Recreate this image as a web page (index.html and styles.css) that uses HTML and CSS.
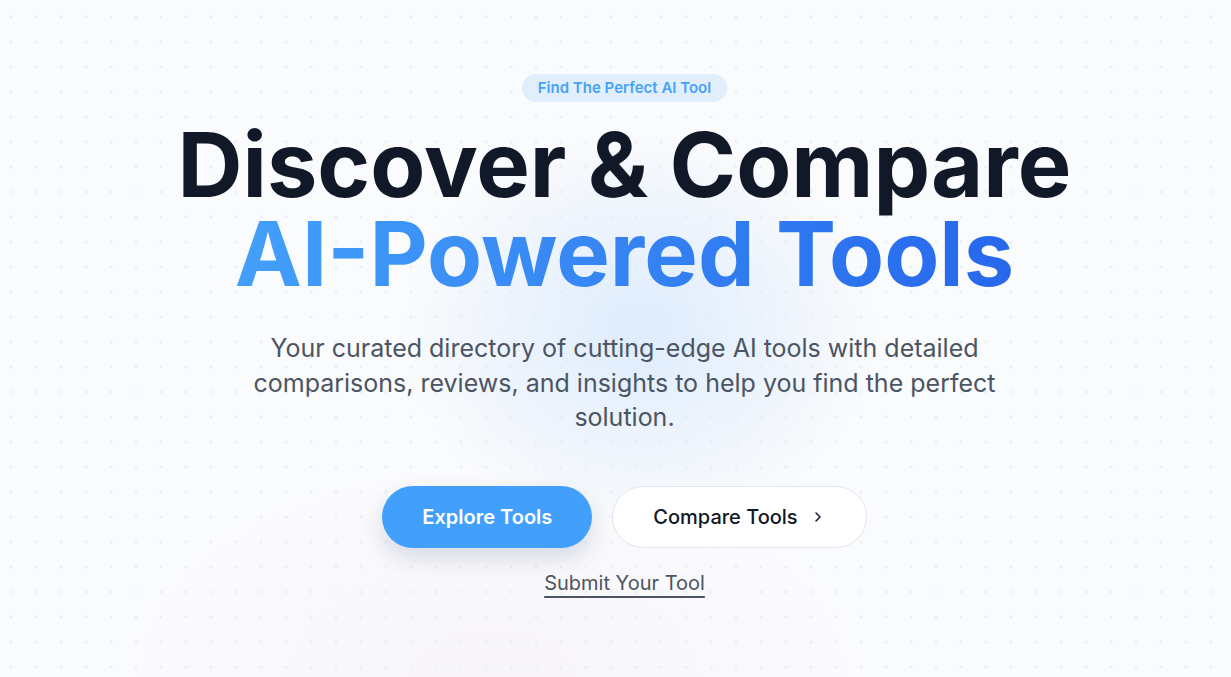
FILE: index.html
```html
<!DOCTYPE html>
<html lang="en">
<head>
<meta charset="utf-8">
<title>Discover &amp; Compare AI-Powered Tools</title>
<link rel="stylesheet" href="styles.css">
</head>
<body>
<section class="hero">
  <div class="glow"></div>
  <div class="hero-inner">
    <span class="badge">Find The Perfect AI Tool</span>
    <h1 class="title">
      <span class="title-line">Discover &amp; Compare</span>
      <span class="title-line title-gradient">AI-Powered Tools</span>
    </h1>
    <p class="lead">Your curated directory of cutting-edge AI tools with detailed comparisons, reviews, and insights to help you find the perfect solution.</p>
    <div class="actions">
      <a class="btn btn-primary" href="#">Explore Tools</a>
      <a class="btn btn-outline" href="#">Compare Tools
        <svg class="chev" width="16" height="16" viewBox="0 0 24 24" fill="none" stroke="currentColor" stroke-width="2.2" stroke-linecap="round" stroke-linejoin="round"><path d="M9 6l6 6-6 6"/></svg>
      </a>
    </div>
    <a class="submit" href="#">Submit Your Tool</a>
  </div>
</section>
</body>
</html>
```
FILE: styles.css
```css
* { box-sizing: border-box; }
html, body { margin: 0; padding: 0; }
body {
  font-family: Inter, "Noto Sans", "Liberation Sans", sans-serif;
  background: #fafbfc;
  color: #111827;
  min-height: 677px;
  overflow: hidden;
}
.hero {
  position: relative;
  min-height: 677px;
  background-color: #fafbfc;
  background-image:
    radial-gradient(circle at 50% 50%, #e9ecf7 0, #e9ecf7 1px, transparent 1.6px),
    radial-gradient(ellipse 520px 300px at 40% 100%, rgba(247, 243, 249, 0.8), rgba(247, 243, 249, 0) 70%);
  background-size: 25px 25px, 100% 100%;
  background-position: -1.5px 4.5px, 0 0;
}
.glow {
  position: absolute;
  left: 400px;
  top: 130px;
  width: 480px;
  height: 400px;
  border-radius: 50%;
  background: radial-gradient(closest-side, rgba(217, 233, 253, 0.85), rgba(221, 235, 254, 0.45) 55%, rgba(221, 235, 254, 0) 100%);
  pointer-events: none;
}
.hero-inner {
  position: relative;
  display: flex;
  flex-direction: column;
  align-items: center;
  text-align: center;
  padding-top: 74px;
  padding-left: 18px;
}
.badge {
  display: inline-block;
  padding: 4px 16px;
  border-radius: 999px;
  background: #e1effd;
  color: #45a2f8;
  font-size: 15px;
  line-height: 20px;
  font-weight: 600;
}
.title {
  margin: 18px 0 0;
  font-size: 90px;
  line-height: 89px;
  font-weight: 700;
  color: #111827;
}
.title-line { display: block; }
.title-gradient {
  background: linear-gradient(90deg, #45a4fb 0%, #2563eb 100%);
  -webkit-background-clip: text;
  background-clip: text;
  color: transparent;
}
.lead {
  margin: 33px 0 0;
  max-width: 768px;
  font-size: 25px;
  line-height: 34.5px;
  color: #4b5563;
  font-weight: 400;
}
.actions {
  display: flex;
  gap: 20px;
  margin-top: 51px;
}
.btn {
  display: inline-flex;
  align-items: center;
  justify-content: center;
  gap: 12px;
  height: 62px;
  padding: 0 40px;
  border-radius: 999px;
  font-size: 20px;
  text-decoration: none;
}
.btn-primary {
  background: #42a0fc;
  color: #fff;
  font-weight: 600;
  box-shadow: 0 10px 22px rgba(30, 60, 110, 0.16);
}
.btn-outline {
  background: #fff;
  color: #111827;
  font-weight: 500;
  border: 1px solid #e3e6ee;
}
.chev { display: block; }
.submit {
  margin-top: 21px;
  font-size: 20px;
  line-height: 28px;
  color: #4b5563;
  text-decoration: underline;
  text-decoration-thickness: 2px;
  text-underline-offset: 6px;
}
```
